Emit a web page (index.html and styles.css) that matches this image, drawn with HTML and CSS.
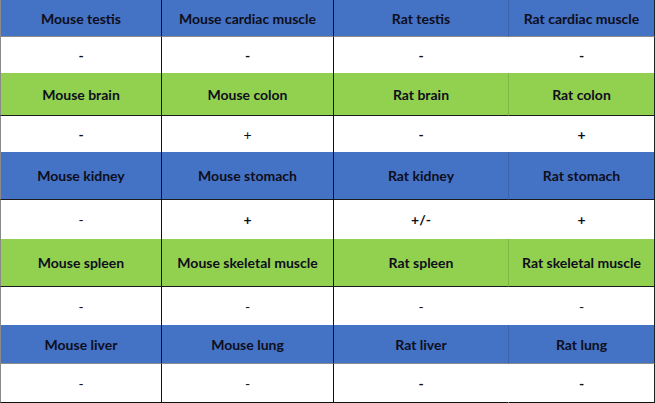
FILE: index.html
```html
<!DOCTYPE html>
<html>
<head>
<meta charset="utf-8">
<link rel="stylesheet" href="styles.css">
</head>
<body>
<div class="grid">
  <div class="cell head blue h37 c1 soft">Mouse testis</div>
  <div class="cell head blue h37 c2 soft">Mouse cardiac muscle</div>
  <div class="cell head blue h37 c3 soft">Rat testis</div>
  <div class="cell head blue h37 c4 soft">Rat cardiac muscle</div>

  <div class="cell val h36 c1 b">-</div>
  <div class="cell val h36 c2 b">-</div>
  <div class="cell val h36 c3 b">-</div>
  <div class="cell val h36 c4 b">-</div>

  <div class="cell head green h43 c1">Mouse brain</div>
  <div class="cell head green h43 c2">Mouse colon</div>
  <div class="cell head green h43 c3">Rat brain</div>
  <div class="cell head green h43 c4">Rat colon</div>

  <div class="cell val h36 c1 b">-</div>
  <div class="cell val h36 c2">+</div>
  <div class="cell val h36 c3 b">-</div>
  <div class="cell val h36 c4 b">+</div>

  <div class="cell head blue h48 c1">Mouse kidney</div>
  <div class="cell head blue h48 c2">Mouse stomach</div>
  <div class="cell head blue h48 c3">Rat kidney</div>
  <div class="cell head blue h48 c4">Rat stomach</div>

  <div class="cell val h39 c1">-</div>
  <div class="cell val h39 c2 b">+</div>
  <div class="cell val h39 c3 b">+/-</div>
  <div class="cell val h39 c4 b">+</div>

  <div class="cell head green h48 c1">Mouse spleen</div>
  <div class="cell head green h48 c2">Mouse skeletal muscle</div>
  <div class="cell head green h48 c3">Rat spleen</div>
  <div class="cell head green h48 c4">Rat skeletal muscle</div>

  <div class="cell val h38 c1">-</div>
  <div class="cell val h38 c2">-</div>
  <div class="cell val h38 c3">-</div>
  <div class="cell val h38 c4">-</div>

  <div class="cell head blue h39 c1 soft">Mouse liver</div>
  <div class="cell head blue h39 c2 soft">Mouse lung</div>
  <div class="cell head blue h39 c3 soft">Rat liver</div>
  <div class="cell head blue h39 c4 soft">Rat lung</div>

  <div class="cell val h39 c1 last">-</div>
  <div class="cell val h39 c2 last">-</div>
  <div class="cell val h39 c3 last b">-</div>
  <div class="cell val h39 c4 last b">-</div>
</div>
</body>
</html>
```

FILE: styles.css
```css
html, body {
  margin: 0;
  padding: 0;
  background: #ffffff;
}

.grid {
  display: grid;
  grid-template-columns: 162px 172px 175px 146px;
  width: 655px;
  font-family: Lato, "Open Sans", sans-serif;
  font-size: 14px;
  color: #0e0e1c;
}

.cell {
  box-sizing: border-box;
  display: flex;
  align-items: center;
  justify-content: center;
  white-space: nowrap;
}

.head {
  font-weight: 700;
  border-bottom: 1px solid #1a1a1a;
}

.head.soft {
  border-bottom-color: #8c8c8c;
}

.val {
  font-weight: 400;
  font-size: 14px;
}

.val.b {
  font-weight: 700;
}

.blue { background: #4472c4; }
.green { background: #92d050; }

.h36 { height: 36px; }
.h37 { height: 37px; }
.h38 { height: 38px; }
.h39 { height: 39px; }
.h43 { height: 43px; }
.h48 { height: 48px; }

.c1 {
  border-left: 1px solid #8a8a8a;
  border-right: 1px solid #111;
}
.c2 {
  border-right: 1px solid #111;
}
.c3 {
  border-right: 1px solid transparent;
}
.head.c3 {
  border-right-color: rgba(0, 0, 0, 0.12);
}
.c4 {
  border-right: 1px solid #222;
}

.last {
  border-bottom: 1px solid #111;
}
```
